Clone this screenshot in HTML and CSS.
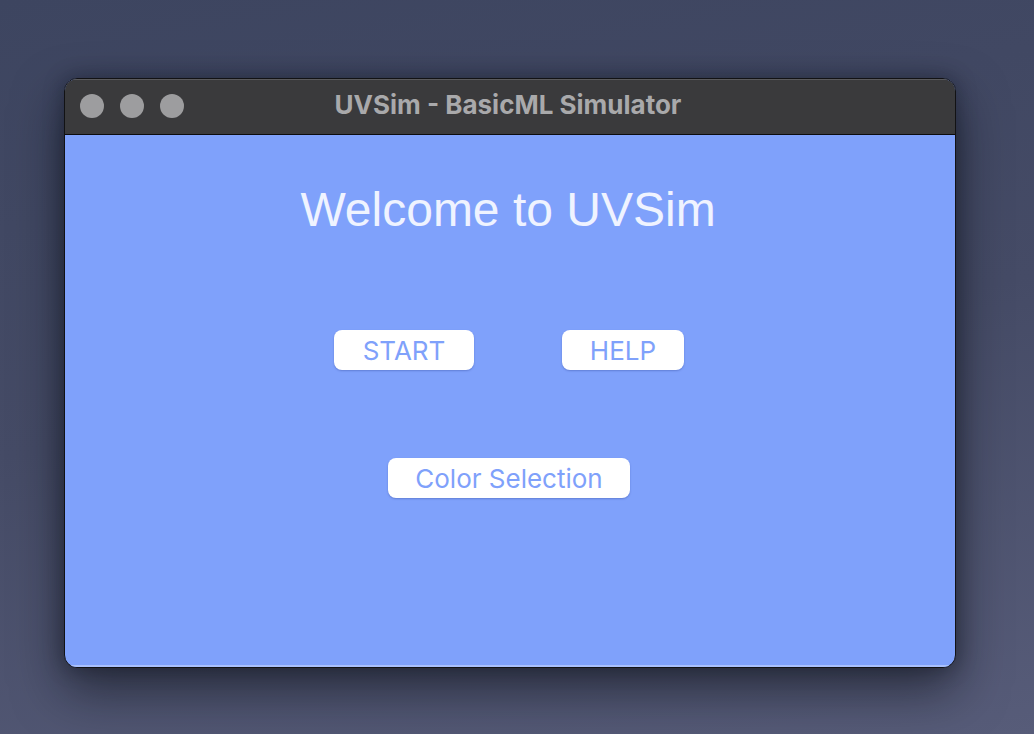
FILE: index.html
```html
<!DOCTYPE html>
<html lang="en">
<head>
<meta charset="utf-8">
<title>UVSim - BasicML Simulator</title>
<link rel="stylesheet" href="styles.css">
</head>
<body>
<div class="desktop">
  <div class="window">
    <div class="titlebar">
      <div class="lights">
        <span class="light"></span>
        <span class="light"></span>
        <span class="light"></span>
      </div>
      <div class="title">UVSim - BasicML Simulator</div>
    </div>
    <div class="content">
      <h1 class="welcome">Welcome to UVSim</h1>
      <div class="row">
        <button class="btn btn-start">START</button>
        <button class="btn btn-help">HELP</button>
      </div>
      <div class="row row-color">
        <button class="btn btn-color">Color Selection</button>
      </div>
    </div>
  </div>
</div>
</body>
</html>
```
FILE: styles.css
```css
html, body {
  margin: 0;
  padding: 0;
}
body {
  width: 1034px;
  height: 734px;
  overflow: hidden;
  background: linear-gradient(170deg, #3d4560 0%, #454b66 50%, #575c79 100%);
  font-family: "Liberation Sans", Arial, sans-serif;
}
.desktop {
  padding: 78px 0 0 64px;
}
.window {
  width: 892px;
  height: 590px;
  box-sizing: border-box;
  border: 1px solid #121214;
  border-radius: 13px;
  overflow: hidden;
  display: flex;
  flex-direction: column;
  box-shadow: 0 22px 50px rgba(10, 12, 20, 0.55), 0 0 20px rgba(10, 12, 20, 0.35);
  background: #7fa1fb;
}
.titlebar {
  position: relative;
  height: 55px;
  flex: none;
  background: #3a3a3c;
  border-bottom: 1px solid #0c0c0e;
  box-shadow: inset 0 1px 0 #5a5a5c;
  display: flex;
  align-items: center;
  justify-content: center;
}
.lights {
  position: absolute;
  left: 15px;
  top: 15px;
  display: flex;
  gap: 16px;
}
.light {
  width: 24px;
  height: 24px;
  border-radius: 50%;
  background: #9d9d9f;
}
.title {
  font-family: Inter, "Noto Sans", sans-serif;
  font-weight: 700;
  font-size: 26px;
  line-height: 30px;
  color: #a9a9ab;
  margin-left: -4px;
  margin-top: -4px;
}
.content {
  flex: 1;
  display: flex;
  flex-direction: column;
  align-items: center;
  padding-top: 47px;
  padding-right: 2px;
  box-shadow: inset 0 -2px 0 #a9c0fd;
}
.welcome {
  margin: 0 0 0 -2px;
  font-family: "Liberation Sans", Arial, sans-serif;
  font-weight: 400;
  font-size: 48px;
  line-height: 56px;
  color: #eff3ff;
}
.row {
  display: flex;
  gap: 88px;
  margin-top: 92px;
}
.row-color {
  margin-top: 88px;
}
.btn {
  height: 40px;
  box-sizing: border-box;
  border: none;
  border-radius: 8px;
  background: #ffffff;
  color: #7fa1fb;
  font-family: Inter, "Noto Sans", sans-serif;
  font-size: 26px;
  padding: 0;
  box-shadow: 0 1px 2px rgba(40, 60, 140, 0.35);
}
.btn-start { width: 140px; }
.btn-help { width: 122px; }
.btn-color { width: 242px; }
```
